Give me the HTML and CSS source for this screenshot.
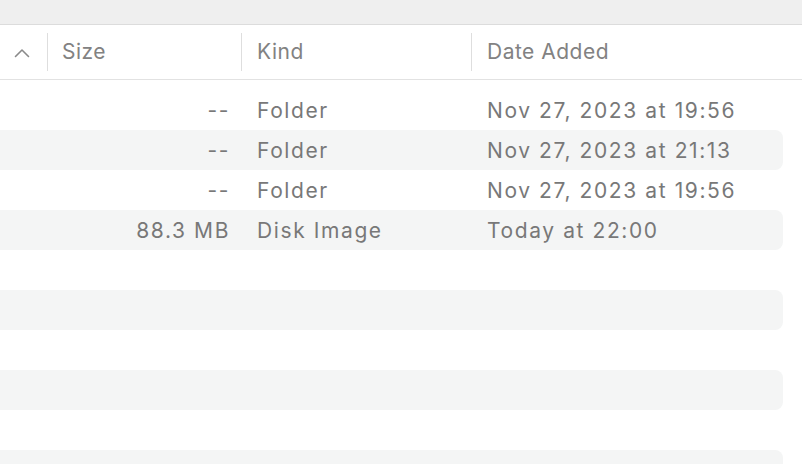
FILE: index.html
```html
<!DOCTYPE html>
<html>
<head>
<meta charset="utf-8">
<link rel="stylesheet" href="styles.css">
</head>
<body>
<div class="toolbar"></div>
<div class="header">
  <div class="hcell name"><svg class="chev" width="16" height="10" viewBox="0 0 16 10"><path d="M1.5 8.5 L8 2 L14.5 8.5" fill="none" stroke="#8a8a8a" stroke-width="1.6" stroke-linecap="round" stroke-linejoin="round"/></svg></div>
  <div class="divider"></div>
  <div class="hcell size">Size</div>
  <div class="divider"></div>
  <div class="hcell kind">Kind</div>
  <div class="divider"></div>
  <div class="hcell date">Date Added</div>
</div>
<div class="rows">
  <div class="row"><div></div><div class="c-size">--</div><div class="c-kind">Folder</div><div class="c-date">Nov 27, 2023 at 19:56</div></div>
  <div class="row alt"><div></div><div class="c-size">--</div><div class="c-kind">Folder</div><div class="c-date">Nov 27, 2023 at 21:13</div></div>
  <div class="row"><div></div><div class="c-size">--</div><div class="c-kind">Folder</div><div class="c-date">Nov 27, 2023 at 19:56</div></div>
  <div class="row alt"><div></div><div class="c-size">88.3 MB</div><div class="c-kind">Disk Image</div><div class="c-date">Today at 22:00</div></div>
  <div class="row"></div>
  <div class="row alt"></div>
  <div class="row"></div>
  <div class="row alt"></div>
  <div class="row"></div>
  <div class="row alt"></div>
</div>
</body>
</html>
```
FILE: styles.css
```css
* { box-sizing: border-box; }
html, body { margin: 0; padding: 0; background: #fff; overflow: hidden; }
body {
  font-family: Inter, "Helvetica Neue", Arial, sans-serif;
  font-size: 21px;
  color: #787878;
  width: 802px;
  height: 464px;
}
.toolbar {
  height: 25px;
  background: #efefef;
  border-bottom: 1px solid #dcdcdc;
}
.header {
  height: 55px;
  display: flex;
  align-items: center;
  border-bottom: 1px solid #e2e2e2;
  color: #828282;
  letter-spacing: 0.5px;
}
.hcell { height: 100%; display: flex; align-items: center; padding-bottom: 2px; }
.name { width: 47px; padding-left: 14px; padding-bottom: 0; }
.chev { display: block; margin-top: 2px; }
.divider { width: 1px; height: 38px; background: #dedede; flex: none; }
.size { width: 193px; padding-left: 14px; }
.kind { width: 229px; padding-left: 15px; }
.date { flex: 1; padding-left: 15px; }
.rows { padding-top: 10px; padding-right: 19px; }
.row {
  height: 40px;
  display: grid;
  grid-template-columns: 47px 194px 230px 1fr;
  align-items: center;
  border-radius: 0 8px 8px 0;
  letter-spacing: 1.6px;
}
.row.alt { background: #f4f5f5; }
.c-size { text-align: right; padding-right: 11px; }
.c-kind { padding-left: 16px; }
.c-date { padding-left: 16px; }
```
